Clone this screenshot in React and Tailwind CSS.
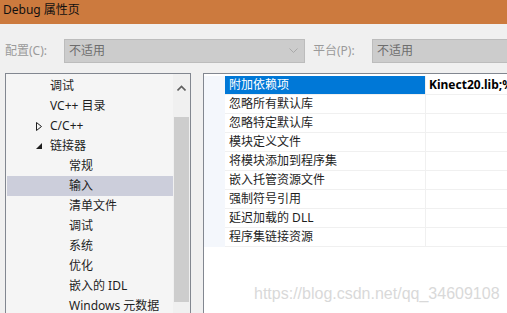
import React from "react";

const FONT = { fontFamily: '"Noto Sans", "Noto Sans CJK SC", sans-serif' };

function TreeRow({ label, level, expander, selected }) {
  return (
    <div
      className={`h-[20px] flex items-center text-[12px] text-[#1e1e1e] ${selected ? "bg-[#cccedb]" : ""}`}
    >
      <div className={level === 0 ? "w-[43px] shrink-0 flex items-center justify-end pr-[8px]" : "w-[62px] shrink-0"}>
        {expander === "closed" && (
          <svg width="6" height="9" viewBox="0 0 6 9">
            <path d="M0.5 0.5 L5.5 4.5 L0.5 8.5 Z" fill="none" stroke="#1e1e1e" strokeWidth="1" />
          </svg>
        )}
        {expander === "open" && (
          <svg width="6" height="6" viewBox="0 0 6 6">
            <path d="M6 0 L6 6 L0 6 Z" fill="#1e1e1e" />
          </svg>
        )}
      </div>
      <span className="leading-[20px] whitespace-nowrap">{label}</span>
    </div>
  );
}

function PropRow({ name, value, selected }) {
  return (
    <div className="h-[19px] flex">
      <div className="w-[21px] shrink-0 bg-[#f4f7fc]" />
      <div className="w-[200px] shrink-0 flex flex-col">
        <div
          className={`h-[18px] pl-[4px] flex items-center text-[12px] whitespace-nowrap ${selected ? "bg-[#0078d7] text-white" : "text-[#1e1e1e]"}`}
        >
          {name}
        </div>
        <div className="h-[1px] bg-[#f0f0f0]" />
      </div>
      <div className="w-[1px] shrink-0 bg-[#f0f0f0]" />
      <div className="flex-1 flex flex-col">
        <div className="h-[18px] pl-[3px] flex items-center text-[12px] font-bold text-black whitespace-nowrap">
          {value}
        </div>
        <div className="h-[1px] bg-[#f0f0f0]" />
      </div>
    </div>
  );
}

export default function App() {
  const tree = [
    { label: "调试", level: 0 },
    { label: "VC++ 目录", level: 0 },
    { label: "C/C++", level: 0, expander: "closed" },
    { label: "链接器", level: 0, expander: "open" },
    { label: "常规", level: 1 },
    { label: "输入", level: 1, selected: true },
    { label: "清单文件", level: 1 },
    { label: "调试", level: 1 },
    { label: "系统", level: 1 },
    { label: "优化", level: 1 },
    { label: "嵌入的 IDL", level: 1 },
    { label: "Windows 元数据", level: 1 },
  ];
  const props = [
    { name: "附加依赖项", value: "Kinect20.lib;%(AdditionalDependencies)", selected: true },
    { name: "忽略所有默认库" },
    { name: "忽略特定默认库" },
    { name: "模块定义文件" },
    { name: "将模块添加到程序集" },
    { name: "嵌入托管资源文件" },
    { name: "强制符号引用" },
    { name: "延迟加载的 DLL" },
    { name: "程序集链接资源" },
  ];
  return (
    <div className="w-[507px] h-[313px] bg-[#f0f0f0] overflow-hidden flex flex-col relative" style={FONT}>
      <div className="h-[24px] shrink-0 bg-[#cc7a3e] pl-[3px] pt-[2px] text-[12px] leading-[16px] text-[#101010]">
        Debug 属性页
      </div>
      <div className="mt-[15px] h-[24px] shrink-0 flex items-center overflow-hidden">
        <div className="w-[64px] shrink-0 pl-[5px] text-[12px] text-[#9a9a9a] whitespace-nowrap">配置(C):</div>
        <div className="w-[241px] shrink-0 h-[24px] bg-[#cccccc] border border-[#bcbcbc] flex items-center pl-[4px] pr-[6px]">
          <span className="flex-1 text-[12px] text-[#6d6d6d]">不适用</span>
          <svg width="9" height="6" viewBox="0 0 9 6">
            <path d="M0.5 0.5 L4.5 4.5 L8.5 0.5" fill="none" stroke="#a8a8a8" strokeWidth="1" />
          </svg>
        </div>
        <div className="w-[67px] shrink-0 pl-[8px] text-[12px] text-[#9a9a9a] whitespace-nowrap">平台(P):</div>
        <div className="w-[160px] shrink-0 h-[24px] bg-[#cccccc] border border-[#bcbcbc] flex items-center pl-[4px]">
          <span className="text-[12px] text-[#6d6d6d]">不适用</span>
        </div>
      </div>
      <div className="mt-[10px] flex-1 flex min-h-0">
        <div className="ml-[5px] w-[186px] shrink-0 h-[260px] border border-[#828790] bg-[#f5f5f5] flex">
          <div className="w-[167px] pt-[2px] pl-[1px] flex flex-col overflow-hidden">
            {tree.map((t, i) => (
              <TreeRow key={i} {...t} />
            ))}
          </div>
          <div className="w-[17px] bg-[#f0f0f0] flex flex-col">
            <div className="h-[22px] flex items-end justify-center pb-[5px]">
              <svg width="9" height="6" viewBox="0 0 9 6">
                <path d="M0.5 5.5 L4.5 1.5 L8.5 5.5" fill="none" stroke="#606060" strokeWidth="1.6" />
              </svg>
            </div>
            <div className="h-[21px]" />
            <div className="ml-[1px] w-[15px] h-[185px] bg-[#cdcdcd]" />
          </div>
        </div>
        <div className="ml-[12px] w-[330px] shrink-0 h-[260px] border border-[#828790] bg-white pt-[2px] overflow-hidden">
          {props.map((p, i) => (
            <PropRow key={i} {...p} />
          ))}
        </div>
      </div>
      <div
        className="absolute left-[254px] top-[284px] text-[16px] leading-[20px] text-[#d9d9d9] whitespace-nowrap"
        style={{ fontFamily: '"Liberation Sans", Arial, sans-serif' }}
      >
        https://blog.csdn.net/qq_34609108
      </div>
    </div>
  );
}
